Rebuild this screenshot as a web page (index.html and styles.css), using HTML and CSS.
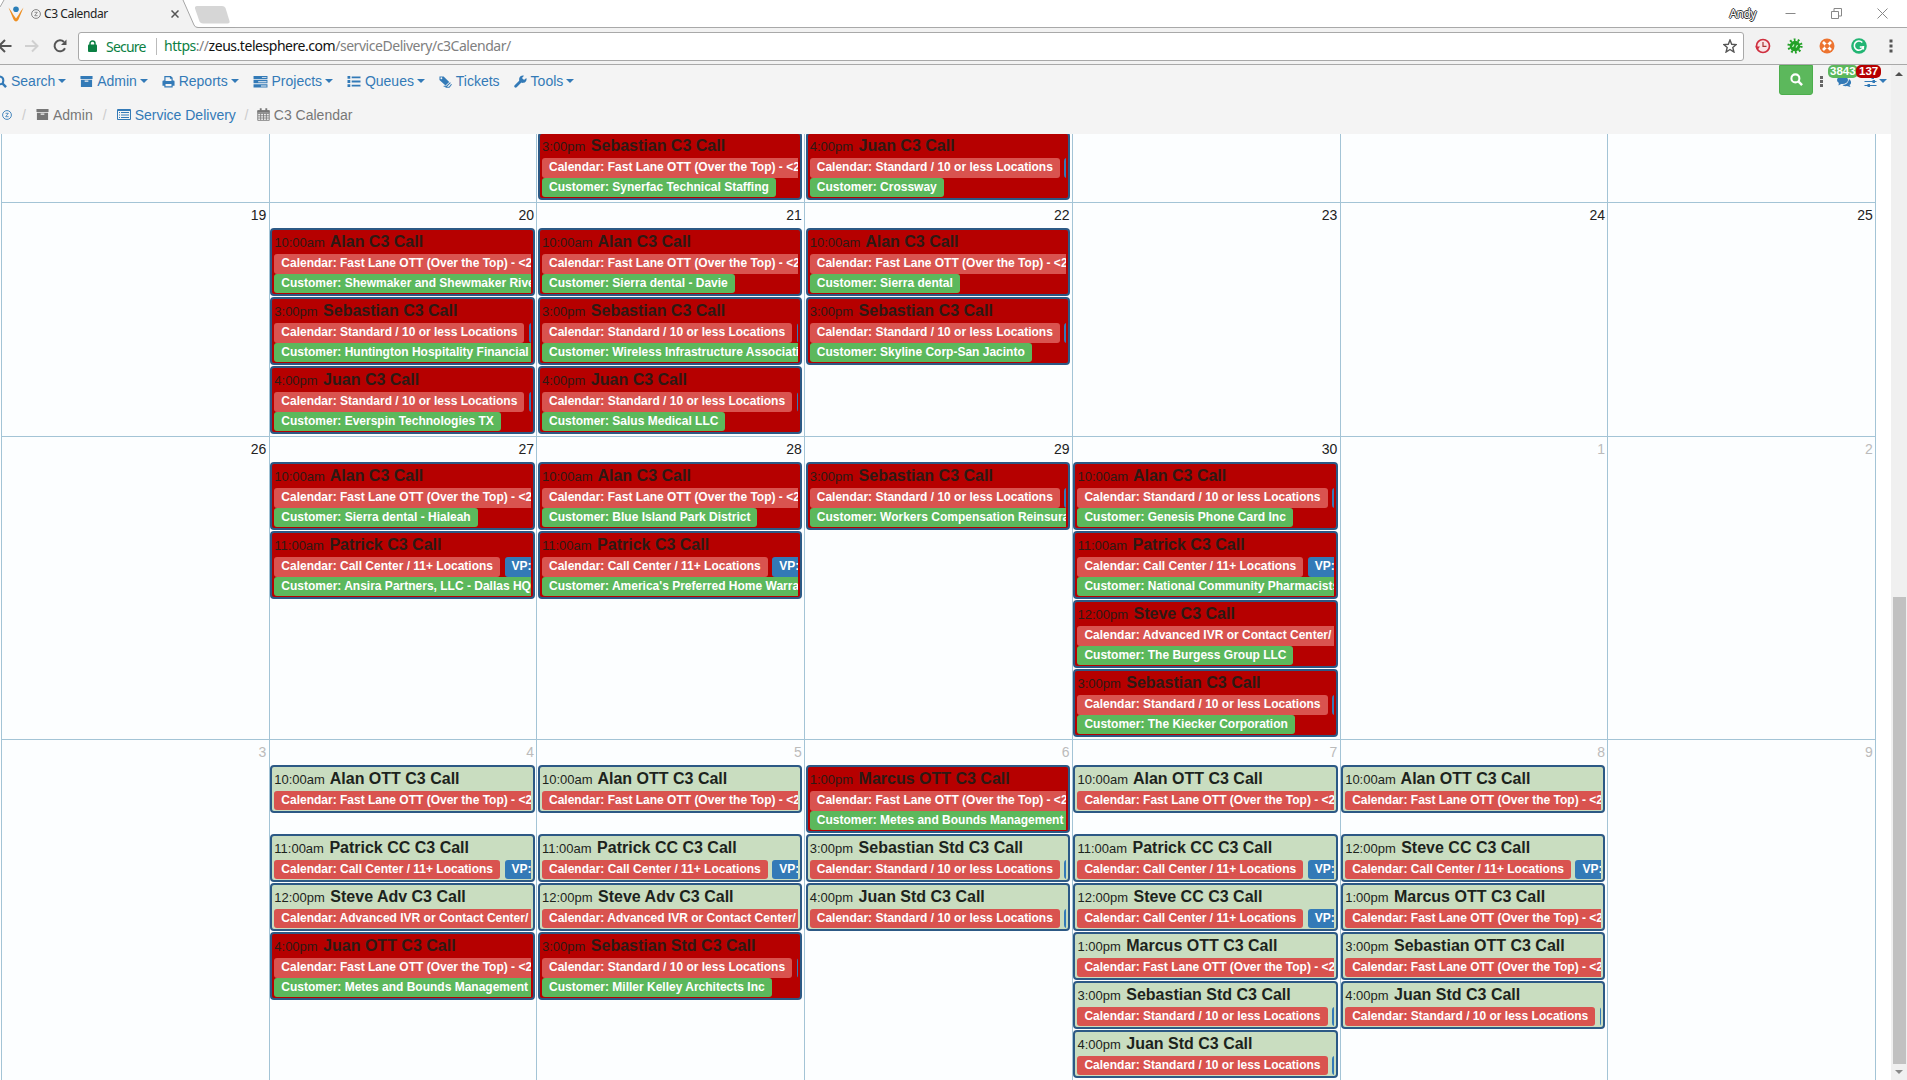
FILE: index.html
```html
<!DOCTYPE html>
<html lang="en">
<head>
<meta charset="utf-8">
<title>C3 Calendar</title>
<link rel="stylesheet" href="styles.css">
</head>
<body>
<svg width="0" height="0" class="defs">
  <symbol id="search" viewBox="0 0 14 14"><circle cx="5.800" cy="5.800" r="4.300" fill="none" stroke="currentColor" stroke-width="2.200"/><path d="M9 9L13 13" stroke="currentColor" stroke-width="2.600"/></symbol>
  <symbol id="archive" viewBox="0 0 14 14"><path fill="currentColor" fill-rule="evenodd" d="M.5 1H13.500V4.300H.5ZM1 5H13V13H1ZM5 6V7.200H9V6Z"/></symbol>
  <symbol id="print" viewBox="0 0 14 14"><path fill="currentColor" fill-rule="evenodd" d="M2.500 1H9.500L11.500 3V6H12.500Q13.500 6 13.500 7V11.500H11.500V13.500H2.500V11.500H.5V7Q.5 6 1.500 6H2.500ZM3.800 2.300V6.500H10.200V4H8.500V2.300ZM3.800 9.800V12H10.200V9.800Z"/></symbol>
  <symbol id="server" viewBox="0 0 15 14"><path fill="currentColor" fill-rule="evenodd" d="M0 1H15V4.500H0ZM0 5.500H15V9H0ZM0 10H15V13.500H0ZM9 2.300V3.300H14V2.300ZM5 6.800V7.800H14V6.800ZM8 11.300V12.300H14V11.300Z"/></symbol>
  <symbol id="list" viewBox="0 0 14 14"><path fill="currentColor" d="M0 1H3V4H0ZM0 5.500H3V8.500H0ZM0 10H3V13H0ZM4.500 1.500H14V3.500H4.500ZM4.500 6H14V8H4.500ZM4.500 10.500H14V12.500H4.500Z"/></symbol>
  <symbol id="tags" viewBox="0 0 14 14"><path fill="currentColor" fill-rule="evenodd" d="M.5 1.500H5L11 7.500L7 11.300L.5 5.500ZM2.500 2.500A1 1 0 1 0 2.600 4.500A1 1 0 1 0 2.500 2.500Z"/><path d="M12.300 8.200L8.300 12H5M13.500 10L11 13.200H7" fill="none" stroke="currentColor" stroke-width="1.100"/></symbol>
  <symbol id="wrench" viewBox="0 0 14 14"><path d="M1.800 12.200L8.500 5.500" stroke="currentColor" stroke-width="3" stroke-linecap="round"/><path d="M13.300 3.200A4 4 0 1 1 10.800.7L8.800 3L9.300 4.700L11 5.200Z" fill="currentColor"/></symbol>
  <symbol id="listalt" viewBox="0 0 14 13"><path fill="currentColor" fill-rule="evenodd" d="M1 1H13Q14 1 14 2V11Q14 12 13 12H1Q0 12 0 11V2Q0 1 1 1ZM1 3V11H13V3ZM2 4H3V5H2ZM4 4H12V5H4ZM2 6.500H3V7.500H2ZM4 6.500H12V7.500H4ZM2 9H3V10H2ZM4 9H12V10H4Z"/></symbol>
  <symbol id="cal" viewBox="0 0 14 14"><path d="M.8 3H13.200V13.300H.8ZM.8 6H13.200M.8 8.400H13.200M.8 10.800H13.200M3.900 6V13M7 6V13M10.100 6V13" fill="none" stroke="currentColor" stroke-width=".9"/><path d="M.5 2.500H13.500V5H.5ZM3 .3H5V4H3ZM9 .3H11V4H9Z" fill="currentColor"/></symbol>
  <symbol id="zmark" viewBox="0 0 10 10"><circle cx="5" cy="5" r="4.400" fill="none" stroke="currentColor" stroke-width=".9"/><path d="M3.500 3.300H6.300L3.700 6.700H6.600" fill="none" stroke="currentColor" stroke-width=".8"/></symbol>
</svg>

<header class="tabs">
  <svg class="tabshape" viewBox="0 0 235 28"><path d="M0 8L4 0H183L194 25Q195 27.500 198 27.500V28H0Z" fill="#f2f2f2"/><path d="M183 0L194 25Q195 27.500 198 27.500H235M0 7L4 0" fill="none" stroke="#a6a6a6"/><path d="M197 6H222Q224.500 6 225.500 8L229.500 21Q230 23.500 227.500 23.500H203Q200.500 23.500 199.500 21.500L195 8.500Q194.500 6 197 6Z" fill="#d6d6d6"/></svg>
  <div class="tabcontent">
    <svg class="logo" viewBox="0 0 16 16"><path d="M.5 1.500Q3.500 5 5.500 9L8 12.500L10.500 9Q12.500 5 15.500 1.500L10.500 13.500Q8 17.500 5.500 13.500Z" fill="#ee8f22"/><circle cx="8" cy="3.200" r="2.800" fill="#2b7fb8"/></svg>
    <svg class="zm"><use href="#zmark"/></svg>
    <span class="tabtitle">C3 Calendar</span>
    <svg class="closetab" viewBox="0 0 8 8"><path d="M.5.5L7.500 7.500M7.500.5L.5 7.500" stroke="#555" stroke-width="1.500"/></svg>
  </div>
  <div class="window">
    <span class="user">Andy</span>
    <svg viewBox="0 0 11 11"><path d="M.5 5.500H10.500" stroke="#888"/></svg>
    <svg viewBox="0 0 11 11"><path d="M.5 3.500H7.500V10.500H.5ZM3 3.500V.5H10.500V8H7.500" fill="none" stroke="#888"/></svg>
    <svg viewBox="0 0 11 11"><path d="M.5.5L10.500 10.500M10.500.5L.5 10.500" stroke="#888"/></svg>
  </div>
</header>

<div class="toolbar">
  <svg class="back" viewBox="0 0 12 14"><path d="M0 7H11.500M5 1L-1 7L5 13" fill="none" stroke="#555" stroke-width="2"/></svg>
  <svg class="fwd" viewBox="0 0 14 14"><path d="M0 7H12M7 1.500L12.500 7L7 12.500" fill="none" stroke="#d0d0d0" stroke-width="2"/></svg>
  <svg class="reload" viewBox="0 0 14 14"><path d="M12 9.300A5.500 5.500 0 1 1 11 3" fill="none" stroke="#555" stroke-width="2"/><path d="M13.500.5V6H8Z" fill="#555"/></svg>
  <div class="omnibox">
    <svg class="lock" viewBox="0 0 9 12"><path d="M2 5V3.500A2.500 2.500 0 0 1 7 3.500V5" fill="none" stroke="#0b8043" stroke-width="1.500"/><rect y="4.500" width="9" height="7.500" rx="1" fill="#0b8043"/></svg>
    <span class="secure">Secure</span>
    <span class="url"><i>https</i>://<b>zeus.telesphere.com</b>/serviceDelivery/c3Calendar/</span>
    <svg class="star" viewBox="0 0 14 14"><path d="M7 1L8.700 5.300L13.200 5.600L9.800 8.500L10.900 13L7 10.500L3.100 13L4.200 8.500L.8 5.600L5.300 5.300Z" fill="none" stroke="#555" stroke-width="1.400"/></svg>
  </div>
  <div class="exts">
    <svg viewBox="0 0 16 16"><circle cx="8" cy="8" r="6.500" fill="#f8e4e6" stroke="#cf2e3e" stroke-width="1.700"/><path d="M8 4V8.300H11.500" fill="none" stroke="#a33" stroke-width="1.200"/><path d="M0 8.500H5L2.500 12Z" fill="#cf2e3e"/></svg>
    <svg viewBox="0 0 16 16"><circle cx="8" cy="8" r="5.300" fill="#23a127"/><circle cx="8" cy="8" r="6.300" fill="none" stroke="#23a127" stroke-width="2.600" stroke-dasharray="1.800 2.150"/><path d="M5.500 9L7 6.500M9 9.500L10.500 7" stroke="#c9f0c9" stroke-width="1.300"/></svg>
    <svg viewBox="0 0 16 16"><circle cx="8" cy="8" r="7.500" fill="#ed7430"/><path d="M4 4L12 12M12 4L4 12" stroke="#fff" stroke-width="2.600"/><circle cx="8" cy="8" r="2.200" fill="#ed7430"/></svg>
    <svg viewBox="0 0 16 16"><circle cx="8" cy="8" r="7.800" fill="#22b573"/><path d="M11.300 4.500A4.600 4.600 0 1 0 12.300 9H8.800M12.300 8V11.500" fill="none" stroke="#fff" stroke-width="1.600"/></svg>
    <svg viewBox="0 0 16 16"><path d="M6.500 1.500h3v3h-3ZM6.500 6.500h3v3h-3ZM6.500 11.500h3v3h-3Z" fill="#555"/></svg>
  </div>
</div>

<div class="page">
<div class="content">
  <nav class="navbar">
    <a><svg><use href="#search"/></svg>Search<i class="caret"></i></a>
    <a><svg><use href="#archive"/></svg>Admin<i class="caret"></i></a>
    <a><svg><use href="#print"/></svg>Reports<i class="caret"></i></a>
    <a><svg class="w15"><use href="#server"/></svg>Projects<i class="caret"></i></a>
    <a><svg class="w14"><use href="#list"/></svg>Queues<i class="caret"></i></a>
    <a><svg><use href="#tags"/></svg>Tickets</a>
    <a><svg><use href="#wrench"/></svg>Tools<i class="caret"></i></a>
    <div class="navright">
      <span class="go"><svg><use href="#search"/></svg></span>
      <svg class="dots" viewBox="0 0 3 11"><path d="M0 0h3v3H0ZM0 4h3v3H0ZM0 8h3v3H0Z" fill="#666"/></svg>
      <span class="chat"><svg viewBox="0 0 14 11"><ellipse cx="5.500" cy="4" rx="5.500" ry="4"/><path d="M2 6L1.500 9.500L6 7Z"/><path d="M12 3Q16 6.500 12.500 9L13.500 11L10 10Q6 10.500 5.500 9Q11.500 8.500 12 3Z"/></svg><em class="badge ok">3843</em></span>
      <span class="sliders"><svg viewBox="0 0 12 11"><path d="M0 1.500H12M0 5.500H12M0 9.500H12" stroke="#337ab7" stroke-width="1.200"/><path d="M7 0h2.500v3H7ZM8 4h2.500v3H8ZM3 8h2.500v3H3Z"/></svg><em class="badge bad">137</em></span>
      <i class="caret"></i>
    </div>
  </nav>
  <div class="crumbs">
    <svg class="w10 link"><use href="#zmark"/></svg><s>/</s>
    <span><svg><use href="#archive"/></svg>Admin</span><s>/</s>
    <span class="link"><svg class="w14"><use href="#listalt"/></svg>Service Delivery</span><s class="last">/</s>
    <span><svg><use href="#cal"/></svg>C3 Calendar</span>
  </div>

  <main class="calendar">
    <section class="week w1">
      <div class="day"></div>
      <div class="day"></div>
      <div class="day"><div class="ev busy"><h4><time>3:00pm</time> Sebastian C3 Call</h4><p><span class="lb">Calendar: Fast Lane OTT (Over the Top) - &lt;2</span></p><p><span class="lb cu">Customer: Synerfac Technical Staffing</span></p></div></div>
      <div class="day"><div class="ev busy"><h4><time>4:00pm</time> Juan C3 Call</h4><p><span class="lb">Calendar: Standard / 10 or less Locations</span><span class="lb vp"></span></p><p><span class="lb cu">Customer: Crossway</span></p></div></div>
      <div class="day"></div><div class="day"></div><div class="day"></div>
    </section>

    <section class="week w2">
      <div class="day"><div class="num">19</div></div>
      <div class="day"><div class="num">20</div>
        <div class="ev busy"><h4><time>10:00am</time> Alan C3 Call</h4><p><span class="lb">Calendar: Fast Lane OTT (Over the Top) - &lt;2</span></p><p><span class="lb cu">Customer: Shewmaker and Shewmaker Rive</span></p></div>
        <div class="ev busy"><h4><time>3:00pm</time> Sebastian C3 Call</h4><p><span class="lb">Calendar: Standard / 10 or less Locations</span><span class="lb vp"></span></p><p><span class="lb cu">Customer: Huntington Hospitality Financial</span></p></div>
        <div class="ev busy"><h4><time>4:00pm</time> Juan C3 Call</h4><p><span class="lb">Calendar: Standard / 10 or less Locations</span><span class="lb vp"></span></p><p><span class="lb cu">Customer: Everspin Technologies TX</span></p></div>
      </div>
      <div class="day"><div class="num">21</div>
        <div class="ev busy"><h4><time>10:00am</time> Alan C3 Call</h4><p><span class="lb">Calendar: Fast Lane OTT (Over the Top) - &lt;2</span></p><p><span class="lb cu">Customer: Sierra dental - Davie</span></p></div>
        <div class="ev busy"><h4><time>3:00pm</time> Sebastian C3 Call</h4><p><span class="lb">Calendar: Standard / 10 or less Locations</span><span class="lb vp"></span></p><p><span class="lb cu">Customer: Wireless Infrastructure Associati</span></p></div>
        <div class="ev busy"><h4><time>4:00pm</time> Juan C3 Call</h4><p><span class="lb">Calendar: Standard / 10 or less Locations</span><span class="lb vp"></span></p><p><span class="lb cu">Customer: Salus Medical LLC</span></p></div>
      </div>
      <div class="day"><div class="num">22</div>
        <div class="ev busy"><h4><time>10:00am</time> Alan C3 Call</h4><p><span class="lb">Calendar: Fast Lane OTT (Over the Top) - &lt;2</span></p><p><span class="lb cu">Customer: Sierra dental</span></p></div>
        <div class="ev busy"><h4><time>3:00pm</time> Sebastian C3 Call</h4><p><span class="lb">Calendar: Standard / 10 or less Locations</span><span class="lb vp"></span></p><p><span class="lb cu">Customer: Skyline Corp-San Jacinto</span></p></div>
      </div>
      <div class="day"><div class="num">23</div></div>
      <div class="day"><div class="num">24</div></div>
      <div class="day"><div class="num">25</div></div>
    </section>

    <section class="week w3">
      <div class="day"><div class="num">26</div></div>
      <div class="day"><div class="num">27</div>
        <div class="ev busy"><h4><time>10:00am</time> Alan C3 Call</h4><p><span class="lb">Calendar: Fast Lane OTT (Over the Top) - &lt;2</span></p><p><span class="lb cu">Customer: Sierra dental - Hialeah</span></p></div>
        <div class="ev busy"><h4><time>11:00am</time> Patrick C3 Call</h4><p><span class="lb">Calendar: Call Center / 11+ Locations</span><span class="lb vp">VP:</span></p><p><span class="lb cu">Customer: Ansira Partners, LLC - Dallas HQ</span></p></div>
      </div>
      <div class="day"><div class="num">28</div>
        <div class="ev busy"><h4><time>10:00am</time> Alan C3 Call</h4><p><span class="lb">Calendar: Fast Lane OTT (Over the Top) - &lt;2</span></p><p><span class="lb cu">Customer: Blue Island Park District</span></p></div>
        <div class="ev busy"><h4><time>11:00am</time> Patrick C3 Call</h4><p><span class="lb">Calendar: Call Center / 11+ Locations</span><span class="lb vp">VP:</span></p><p><span class="lb cu">Customer: America's Preferred Home Warra</span></p></div>
      </div>
      <div class="day"><div class="num">29</div>
        <div class="ev busy"><h4><time>3:00pm</time> Sebastian C3 Call</h4><p><span class="lb">Calendar: Standard / 10 or less Locations</span><span class="lb vp"></span></p><p><span class="lb cu">Customer: Workers Compensation Reinsura</span></p></div>
      </div>
      <div class="day"><div class="num">30</div>
        <div class="ev busy"><h4><time>10:00am</time> Alan C3 Call</h4><p><span class="lb">Calendar: Standard / 10 or less Locations</span><span class="lb vp"></span></p><p><span class="lb cu">Customer: Genesis Phone Card Inc</span></p></div>
        <div class="ev busy"><h4><time>11:00am</time> Patrick C3 Call</h4><p><span class="lb">Calendar: Call Center / 11+ Locations</span><span class="lb vp">VP:</span></p><p><span class="lb cu">Customer: National Community Pharmacists</span></p></div>
        <div class="ev busy"><h4><time>12:00pm</time> Steve C3 Call</h4><p><span class="lb">Calendar: Advanced IVR or Contact Center/</span></p><p><span class="lb cu">Customer: The Burgess Group LLC</span></p></div>
        <div class="ev busy"><h4><time>3:00pm</time> Sebastian C3 Call</h4><p><span class="lb">Calendar: Standard / 10 or less Locations</span><span class="lb vp"></span></p><p><span class="lb cu">Customer: The Kiecker Corporation</span></p></div>
      </div>
      <div class="day other"><div class="num">1</div></div>
      <div class="day other"><div class="num">2</div></div>
    </section>

    <section class="week w4">
      <div class="day other"><div class="num">3</div></div>
      <div class="day other"><div class="num">4</div>
        <div class="ev spaced"><h4><time>10:00am</time> Alan OTT C3 Call</h4><p><span class="lb">Calendar: Fast Lane OTT (Over the Top) - &lt;2</span></p></div>
        <div class="ev"><h4><time>11:00am</time> Patrick CC C3 Call</h4><p><span class="lb">Calendar: Call Center / 11+ Locations</span><span class="lb vp">VP:</span></p></div>
        <div class="ev"><h4><time>12:00pm</time> Steve Adv C3 Call</h4><p><span class="lb">Calendar: Advanced IVR or Contact Center/</span></p></div>
        <div class="ev busy"><h4><time>4:00pm</time> Juan OTT C3 Call</h4><p><span class="lb">Calendar: Fast Lane OTT (Over the Top) - &lt;2</span></p><p><span class="lb cu">Customer: Metes and Bounds Management</span></p></div>
      </div>
      <div class="day other"><div class="num">5</div>
        <div class="ev spaced"><h4><time>10:00am</time> Alan OTT C3 Call</h4><p><span class="lb">Calendar: Fast Lane OTT (Over the Top) - &lt;2</span></p></div>
        <div class="ev"><h4><time>11:00am</time> Patrick CC C3 Call</h4><p><span class="lb">Calendar: Call Center / 11+ Locations</span><span class="lb vp">VP:</span></p></div>
        <div class="ev"><h4><time>12:00pm</time> Steve Adv C3 Call</h4><p><span class="lb">Calendar: Advanced IVR or Contact Center/</span></p></div>
        <div class="ev busy"><h4><time>3:00pm</time> Sebastian Std C3 Call</h4><p><span class="lb">Calendar: Standard / 10 or less Locations</span><span class="lb vp"></span></p><p><span class="lb cu">Customer: Miller Kelley Architects Inc</span></p></div>
      </div>
      <div class="day other"><div class="num">6</div>
        <div class="ev busy"><h4><time>1:00pm</time> Marcus OTT C3 Call</h4><p><span class="lb">Calendar: Fast Lane OTT (Over the Top) - &lt;2</span></p><p><span class="lb cu">Customer: Metes and Bounds Management</span></p></div>
        <div class="ev"><h4><time>3:00pm</time> Sebastian Std C3 Call</h4><p><span class="lb">Calendar: Standard / 10 or less Locations</span><span class="lb vp"></span></p></div>
        <div class="ev"><h4><time>4:00pm</time> Juan Std C3 Call</h4><p><span class="lb">Calendar: Standard / 10 or less Locations</span><span class="lb vp"></span></p></div>
      </div>
      <div class="day other"><div class="num">7</div>
        <div class="ev spaced"><h4><time>10:00am</time> Alan OTT C3 Call</h4><p><span class="lb">Calendar: Fast Lane OTT (Over the Top) - &lt;2</span></p></div>
        <div class="ev"><h4><time>11:00am</time> Patrick CC C3 Call</h4><p><span class="lb">Calendar: Call Center / 11+ Locations</span><span class="lb vp">VP:</span></p></div>
        <div class="ev"><h4><time>12:00pm</time> Steve CC C3 Call</h4><p><span class="lb">Calendar: Call Center / 11+ Locations</span><span class="lb vp">VP:</span></p></div>
        <div class="ev"><h4><time>1:00pm</time> Marcus OTT C3 Call</h4><p><span class="lb">Calendar: Fast Lane OTT (Over the Top) - &lt;2</span></p></div>
        <div class="ev"><h4><time>3:00pm</time> Sebastian Std C3 Call</h4><p><span class="lb">Calendar: Standard / 10 or less Locations</span><span class="lb vp"></span></p></div>
        <div class="ev"><h4><time>4:00pm</time> Juan Std C3 Call</h4><p><span class="lb">Calendar: Standard / 10 or less Locations</span><span class="lb vp"></span></p></div>
      </div>
      <div class="day other"><div class="num">8</div>
        <div class="ev spaced"><h4><time>10:00am</time> Alan OTT C3 Call</h4><p><span class="lb">Calendar: Fast Lane OTT (Over the Top) - &lt;2</span></p></div>
        <div class="ev"><h4><time>12:00pm</time> Steve CC C3 Call</h4><p><span class="lb">Calendar: Call Center / 11+ Locations</span><span class="lb vp">VP:</span></p></div>
        <div class="ev"><h4><time>1:00pm</time> Marcus OTT C3 Call</h4><p><span class="lb">Calendar: Fast Lane OTT (Over the Top) - &lt;2</span></p></div>
        <div class="ev"><h4><time>3:00pm</time> Sebastian OTT C3 Call</h4><p><span class="lb">Calendar: Fast Lane OTT (Over the Top) - &lt;2</span></p></div>
        <div class="ev"><h4><time>4:00pm</time> Juan Std C3 Call</h4><p><span class="lb">Calendar: Standard / 10 or less Locations</span><span class="lb vp"></span></p></div>
      </div>
      <div class="day other"><div class="num">9</div></div>
    </section>
  </main>
</div>
<div class="scroll">
  <svg viewBox="0 0 8 4"><path d="M0 4L4 0L8 4Z" fill="#505050"/></svg>
  <div class="thumb"></div>
  <svg viewBox="0 0 8 4"><path d="M0 0L4 4L8 0Z" fill="#8a8a8a"/></svg>
</div>
</div>
</body>
</html>
```
FILE: styles.css
```css
* { box-sizing: border-box; }
body { margin: 0; height: 1080px; overflow: hidden; display: flex; flex-direction: column; background: #fff; font: 14px/20px "Liberation Sans", sans-serif; color: #333; }
.defs { position: absolute; }
svg { display: block; flex: none; }
i, em { font-style: normal; }

/* browser chrome */
.tabs { height: 28px; flex: none; display: flex; justify-content: space-between; position: relative; border-bottom: 1px solid #a9a9a9; }
.tabshape { position: absolute; left: 0; top: 0; width: 235px; height: 28px; }
.tabcontent { position: relative; width: 180px; height: 28px; display: flex; align-items: center; padding-left: 8px; }
.logo { width: 16px; height: 16px; }
.zm { width: 10px; height: 10px; margin: 0 3px 0 7px; color: #777; }
.tabtitle { font: 12px/28px "Noto Sans", sans-serif; color: #222; letter-spacing: -.4px; white-space: nowrap; flex: 1; }
.closetab { width: 8px; height: 8px; margin-right: 1px; }
.window { display: flex; align-items: center; height: 26px; padding-right: 19px; }
.window svg { width: 11px; height: 11px; margin-left: 35px; }
.window .user + svg { margin-left: 29px; }
.user { font: 12px/25px "Noto Sans", sans-serif; color: #fff; letter-spacing: -.5px; text-shadow: 1px 0 #333, -1px 0 #333, 0 1px #333, 0 -1px #333; }
.toolbar { height: 37px; flex: none; display: flex; align-items: center; background: #f2f2f2; border-bottom: 1px solid #a9a9a9; }
.back { width: 12px; height: 14px; margin-right: 13px; }
.fwd { width: 14px; height: 14px; margin-right: 14px; }
.reload { width: 14px; height: 14px; margin-right: 11px; }
.omnibox { width: 1666px; height: 29px; display: flex; align-items: center; border: 1px solid #a9a9a9; border-radius: 3px; background: #fff; padding: 0 6px 0 9px; font: 14px/26px "Noto Sans", sans-serif; }
.lock { width: 9px; height: 12px; margin-right: 9px; }
.secure { color: #0b8043; width: 51px; border-right: 1px solid #bbb; line-height: 17px; letter-spacing: -.8px; }
.url { margin-left: 7px; flex: 1; color: #808080; letter-spacing: -.46px; }
.url i { color: #0b8043; }
.url b { font-weight: 400; color: #111; }
.star { width: 14px; height: 14px; }
.exts { display: flex; gap: 16px; margin-left: 11px; }
.exts svg { width: 16px; height: 16px; }

/* application header */
.page { flex: 1; display: flex; min-height: 0; }
.content { flex: 1; min-width: 0; display: flex; flex-direction: column; }
.navbar { height: 32px; flex: none; display: flex; align-items: center; gap: 14px; background: #f4f4f4; color: #337ab7; }
.navbar a { display: flex; align-items: center; gap: 4px; }
.navbar a:first-child { margin-left: -6px; }
.navbar svg, .crumbs svg { width: 13px; height: 13px; }
.navbar svg.w15 { width: 15px; }
.navbar svg.w14, .crumbs svg.w14 { width: 14px; }
.crumbs svg.w10 { width: 10px; height: 10px; }
.caret { border: 4px solid transparent; border-top-color: currentColor; border-bottom: 0; width: 8px; }
.navbar a .caret { margin-left: -1.2px; }
.navright { margin-left: auto; display: flex; align-items: center; padding-right: 4px; height: 32px; }
.go { width: 34px; height: 30px; margin-bottom: 3px; background: #5cb85c; border: 1px solid #4cae4c; border-radius: 0 0 3px 3px; color: #fff; display: grid; place-items: center; }
.navbar .dots { width: 3px; height: 11px; margin: 0 14px 0 7px; }
.chat, .sliders { position: relative; fill: #337ab7; }
.navbar .chat svg { width: 14px; height: 11px; }
.navbar .sliders svg { width: 13px; height: 11px; }
.sliders { margin: 0 2px 0 13px; }
.badge { position: absolute; top: -11px; font: bold 11.5px/12px "Liberation Sans", sans-serif; color: #fff; border-radius: 5px; padding: 0 2px; height: 13px; }
.ok { left: -9px; background: #5cb85c; }
.bad { left: -8px; background: #b60000; padding: 0 3px; }
.crumbs { height: 37px; flex: none; display: flex; align-items: center; background: #f4f4f4; color: #777; padding: 0 0 2px 2px; }
.crumbs span { display: flex; align-items: center; gap: 4px; }
.crumbs s { text-decoration: none; color: #ccc; width: 24px; text-align: center; }
.crumbs s.last { width: 21px; }
.crumbs .link { color: #337ab7; }

/* calendar grid */
.calendar { flex: 1; overflow: hidden; margin: 0 15px 0 1px; border-right: 1px solid #a3c4d6; background: #fcfeff; display: flex; flex-direction: column; }
.week { display: grid; grid-template-columns: repeat(7, minmax(0, 1fr)); flex: none; }
.week + .week { border-top: 1px solid #a3c4d6; }
.w1 { height: 68px; }
.w2 { height: 234px; }
.w3 { height: 303px; }
.w4 { height: 370px; }
.w1 .ev { margin-top: -2px; }
.day { border-left: 1px solid #a3c4d6; padding: 0 1.8px 0 .6px; }
.num { height: 25px; line-height: 25px; text-align: right; color: #222; padding-right: .5px; }
.other .num { color: #bbb; }
.ev { border: 2px solid #2c5985; border-radius: 4px; background: #c9ddc0; padding: 1px 2px; height: 48px; margin-bottom: 1px; overflow: hidden; color: #1c231c; white-space: nowrap; }
.busy { background: #b60000; height: 68px; color: #2d1a14; }
.spaced { margin-bottom: 21px; }
.ev h4 { margin: 0; font: bold 16px/22px "Liberation Sans", sans-serif; height: 23px; }
.ev time { font-weight: 400; font-size: 13px; margin-right: 1px; }
.ev p { margin: 0; height: 20px; overflow: hidden; display: flex; gap: 4.5px; }
.ev p:last-child { height: 19px; }
.lb { flex: none; font: bold 12px/19px "Liberation Sans", sans-serif; color: #fff; background: #d9534f; border-radius: 3px; padding: 0 7px; }
.cu { background: #5cb85c; }
.vp { background: #337ab7; }

/* page scrollbar */
.scroll { width: 16px; flex: none; background: #f0f0f0; display: flex; flex-direction: column; align-items: center; padding: 7px 0 6px; }
.scroll svg { width: 8px; height: 4px; }
.thumb { width: 13px; height: 467px; margin: 521px 0 auto; background: #c1c1c1; }
```
